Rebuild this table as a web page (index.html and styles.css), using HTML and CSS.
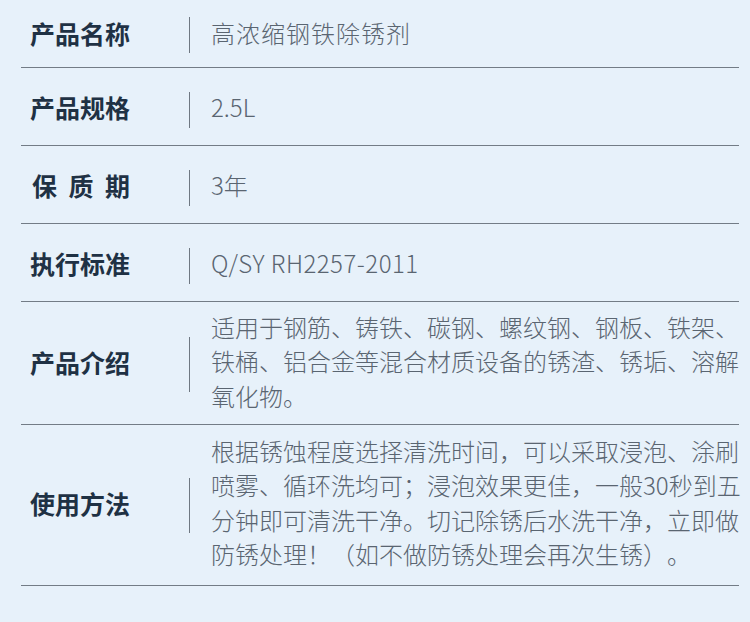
FILE: index.html
```html
<!DOCTYPE html>
<html lang="zh-CN">
<head>
<meta charset="utf-8">
<title>产品参数</title>
<link rel="stylesheet" href="styles.css">
</head>
<body>
<div class="spec">
  <div class="row row-first">
    <div class="label">产品名称</div>
    <div class="sep"></div>
    <div class="value value-cjk">高浓缩钢铁除锈剂</div>
  </div>
  <div class="row row-single">
    <div class="label">产品规格</div>
    <div class="sep"></div>
    <div class="value">2.5L</div>
  </div>
  <div class="row row-single">
    <div class="label label-spaced">保质期</div>
    <div class="sep"></div>
    <div class="value">3年</div>
  </div>
  <div class="row row-single">
    <div class="label">执行标准</div>
    <div class="sep"></div>
    <div class="value value-code">Q/SY RH2257-2011</div>
  </div>
  <div class="row row-intro">
    <div class="label">产品介绍</div>
    <div class="sep sep-tall"></div>
    <div class="value value-para">适用于钢筋、铸铁、碳钢、螺纹钢、钢板、铁架、<br>铁桶、铝合金等混合材质设备的锈渣、锈垢、溶解<br>氧化物。</div>
  </div>
  <div class="row row-usage">
    <div class="label">使用方法</div>
    <div class="sep sep-tall"></div>
    <div class="value value-para">根据锈蚀程度选择清洗时间，可以采取浸泡、涂刷<br>喷雾、循环洗均可；浸泡效果更佳，一般30秒到五<br>分钟即可清洗干净。切记除锈后水洗干净，立即做<br>防锈处理！（如不做防锈处理会再次生锈）。</div>
  </div>
</div>
</body>
</html>
```

FILE: styles.css
```css
html, body {
  margin: 0;
  padding: 0;
  background: #e7f1fa;
}

body {
  width: 750px;
  height: 622px;
  overflow: hidden;
  font-family: "Noto Sans CJK SC", "Noto Sans", sans-serif;
  text-spacing-trim: space-all;
}

.spec {
  padding: 0 11px 0 21px;
}

.row {
  display: flex;
  align-items: center;
  border-bottom: 1px solid #737c86;
  box-sizing: border-box;
}

.row-first {
  height: 68px;
  padding-top: 3px;
}

.row-single {
  height: 78px;
  padding-top: 6px;
}

.row-intro {
  height: 123px;
  padding-top: 2px;
}

.row-usage {
  height: 161px;
}

.label {
  width: 159px;
  padding-left: 9px;
  padding-bottom: 5px;
  flex: none;
  font-size: 25px;
  font-weight: 700;
  color: #1f3144;
  line-height: 36px;
  white-space: nowrap;
}

.label-spaced {
  letter-spacing: 11.5px;
  padding-left: 11px;
  width: 157px;
}

.sep {
  flex: none;
  width: 1px;
  height: 36px;
  background: #6f7882;
}

.sep-tall {
  height: 55px;
}

.value {
  margin-left: 21px;
  padding-bottom: 5px;
  font-size: 24px;
  font-weight: 300;
  color: #5a6571;
  line-height: 36px;
  white-space: nowrap;
}

.value-cjk {
  letter-spacing: 1px;
}

.value-code {
  letter-spacing: 0.5px;
}

.value-para {
  line-height: 34.4px;
}
```
